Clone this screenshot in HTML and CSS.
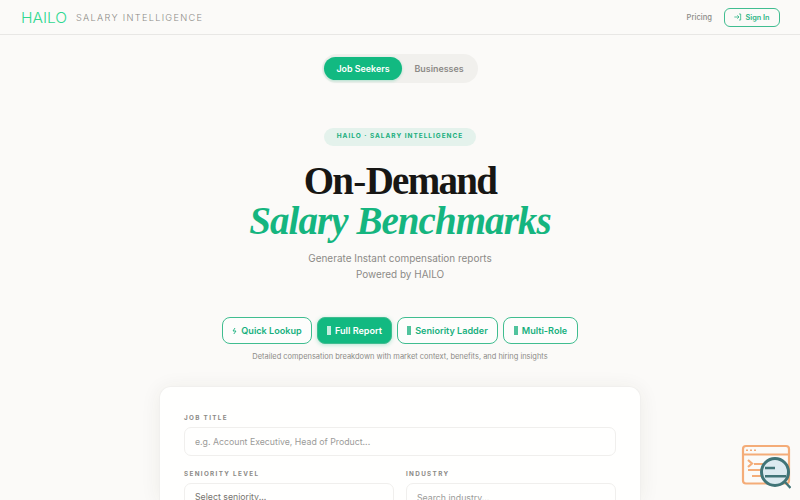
FILE: index.html
```html
<!DOCTYPE html>
<html lang="en">
<head>
  <meta charset="UTF-8" />
  <meta name="viewport" content="width=device-width, initial-scale=1.0"/>
  <title>HAILO Salary Intelligence</title>
  <link rel="stylesheet" href="styles.css">
</head>
<body>

  <nav class="nav">
    <div class="brand">
      <span class="logo">HAILO</span>
      <span class="brand-sub">SALARY INTELLIGENCE</span>
    </div>
    <div class="nav-links">
      <a class="pricing">Pricing</a>
      <button class="signin">
        <svg width="8" height="8" viewBox="0 0 24 24" fill="none" stroke="currentColor" stroke-width="2.4"><path d="M1 12h14M10 7l5 5-5 5M15 3h5v18h-5"/></svg>
        <span>Sign In</span>
      </button>
    </div>
  </nav>

  <main class="page">
    <div class="audience">
      <button class="aud active">Job Seekers</button>
      <button class="aud">Businesses</button>
    </div>

    <div class="eyebrow">HAILO · SALARY INTELLIGENCE</div>
    <h1 class="title"><span class="line1">On<span class="dash">-</span>Demand</span><em class="line2">Salary Benchmarks</em></h1>
    <p class="lead">Generate Instant compensation reports<br>Powered by HAILO</p>

    <div class="modes">
      <button class="mode mode-quick"><svg class="bolt" width="5" height="8" viewBox="0 0 5 8"><path d="M3 1L1 4h3L1.8 7" fill="none" stroke="currentColor" stroke-width="0.9"/></svg>Quick Lookup</button>
      <button class="mode mode-full active"><i class="glyph"></i>Full Report</button>
      <button class="mode mode-ladder"><i class="glyph"></i>Seniority Ladder</button>
      <button class="mode mode-multi"><i class="glyph"></i>Multi-Role</button>
    </div>
    <p class="hint">Detailed compensation breakdown with market context, benefits, and hiring insights</p>

    <form class="card">
      <div class="field wide">
        <label>JOB TITLE</label>
        <input type="text" placeholder="e.g. Account Executive, Head of Product..." />
      </div>
      <div class="field">
        <label>SENIORITY LEVEL</label>
        <div class="select">Select seniority...</div>
      </div>
      <div class="field">
        <label>INDUSTRY</label>
        <input type="text" placeholder="Search industry..." />
      </div>
    </form>
  </main>

  <svg class="widget" width="50" height="46" viewBox="0 0 50 46" fill="none">
    <g stroke="#f4ac78" stroke-width="2.2">
      <rect x="2" y="2" width="46" height="37.5" rx="3"/>
      <path d="M2 10.5h46"/>
      <path d="M5 6.3h2M9 6.3h2M13 6.3h2" stroke-width="1.4"/>
      <path d="M7 16l4 3.5-4 3.5M13 20h12M7 26h14M11 32h10"/>
    </g>
    <circle cx="34" cy="28" r="13.5" fill="#dceaf0" stroke="#407477" stroke-width="3"/>
    <path d="M24 24h10M24 32.3h21M44 38l5.500 6" stroke="#407477" stroke-width="2.4"/>
  </svg>

</body>
</html>
```
FILE: styles.css
```css
* { box-sizing: border-box; }
body {
  background: #fbfaf8;
  margin: 0;
  height: 500px;
  overflow: hidden;
  font-family: Inter, sans-serif;
  color: #8c8a87;
}
button, input {
  font-family: inherit;
  margin: 0;
}
.nav {
  height: 35px;
  padding: 0 20px 0 21px;
  display: flex;
  align-items: center;
  justify-content: space-between;
  border-bottom: 1px solid #e8e7e5;
}
.brand, .nav-links, .signin {
  display: flex;
  align-items: center;
}
.brand { gap: 9px; }
.logo {
  width: 46px;
  color: #2fd890;
  font-size: 14px;
  font-weight: 350;
  line-height: 15px;
  white-space: nowrap;
  transform: scaleX(1.11);
  transform-origin: left;
}
.brand-sub {
  font-size: 9.2px;
  font-weight: 300;
  letter-spacing: 1.3px;
}
.nav-links { gap: 12px; }
.pricing {
  font-size: 7.6px;
  font-weight: 500;
}
.signin {
  width: 56px;
  height: 19px;
  padding: 0;
  gap: 3px;
  justify-content: center;
  border: 1px solid #40bd90;
  border-radius: 6px;
  background: none;
  color: #2bb584;
  font-size: 7.3px;
  font-weight: 600;
}
.page {
  display: flex;
  flex-direction: column;
  align-items: center;
}
.audience {
  display: flex;
  margin-top: 19px;
  padding: 3px 2px 3px 0;
  width: 156px;
  height: 29px;
  border-radius: 15px;
  background: #f1f0ed;
}
.aud {
  flex: 1;
  padding: 0;
  border: none;
  border-radius: 12px;
  background: none;
  color: #8c8a87;
  font-size: 8.9px;
  font-weight: 600;
}
.aud.active {
  flex: 0 0 78px;
  margin-left: 2px;
  background: #12b981;
  color: white;
  box-shadow: 0 1px 3px rgba(18, 185, 129, 0.3);
}
.eyebrow {
  width: 152px;
  height: 18px;
  margin-top: 45px;
  border-radius: 9px;
  background: #e4f2ec;
  color: #18ae7c;
  font-size: 6.5px;
  font-weight: 700;
  letter-spacing: 0.98px;
  line-height: 17px;
  text-align: center;
}
.title {
  display: flex;
  flex-direction: column;
  align-items: center;
  margin: 15px 0 0;
  font-family: "Liberation Serif", serif;
  font-size: 39px;
  line-height: 40px;
  color: #171614;
}
.line1 { letter-spacing: -1.7px; }
.dash {
  font-weight: 400;
  margin: 0 1px;
}
.line2 {
  color: #15b57f;
  letter-spacing: -0.95px;
}
.lead {
  margin: 9px 0 0;
  font-size: 9.95px;
  line-height: 16px;
  text-align: center;
}
.modes {
  display: flex;
  gap: 5px;
  margin-top: 35px;
}
.mode {
  display: flex;
  align-items: center;
  justify-content: center;
  height: 27px;
  padding: 0;
  border: 1px solid #40bd90;
  border-radius: 8px;
  background: #fdfdfc;
  color: #18b07e;
  font-size: 9.1px;
  font-weight: 600;
  white-space: nowrap;
}
.mode.active {
  background: #12b981;
  color: white;
  box-shadow: 0 1px 4px rgba(18, 185, 129, 0.3);
}
.mode-quick { width: 90px; }
.mode-full { width: 75px; }
.mode-ladder { width: 101px; }
.mode-multi { width: 75px; }
.bolt { margin-right: 4px; }
.glyph {
  width: 4px;
  height: 9px;
  margin-right: 4px;
  border: 1px solid currentColor;
  background: currentColor;
  background-clip: content-box;
  opacity: 0.75;
}
.hint {
  margin: 6px 0 0;
  font-size: 7.46px;
  line-height: 13px;
}
.card {
  display: grid;
  grid-template-columns: 1fr 1fr;
  gap: 13px 12px;
  width: 482px;
  height: 114px;
  margin-top: 23px;
  padding: 26px 24px 0;
  align-content: start;
  border: 1px solid #f1f0ee;
  border-bottom: none;
  border-radius: 12px 12px 0 0;
  background: #fffffe;
  box-shadow: 0 2px 20px rgba(60, 50, 30, 0.07);
}
.wide { grid-column: 1 / 3; }
.field label {
  display: block;
  padding-top: 1px;
  margin-bottom: 4px;
  font-size: 6.3px;
  font-weight: 700;
  letter-spacing: 1.35px;
  line-height: 9px;
}
.field input, .select {
  display: block;
  width: 100%;
  height: 29px;
  padding: 0 10px;
  border: 1px solid #f0efed;
  border-radius: 7px;
  background: none;
  color: #77746f;
  font-size: 8.75px;
  line-height: 27px;
}
.field input::placeholder { color: #9b9b99; }
.widget {
  position: fixed;
  left: 741px;
  top: 444px;
}
```
